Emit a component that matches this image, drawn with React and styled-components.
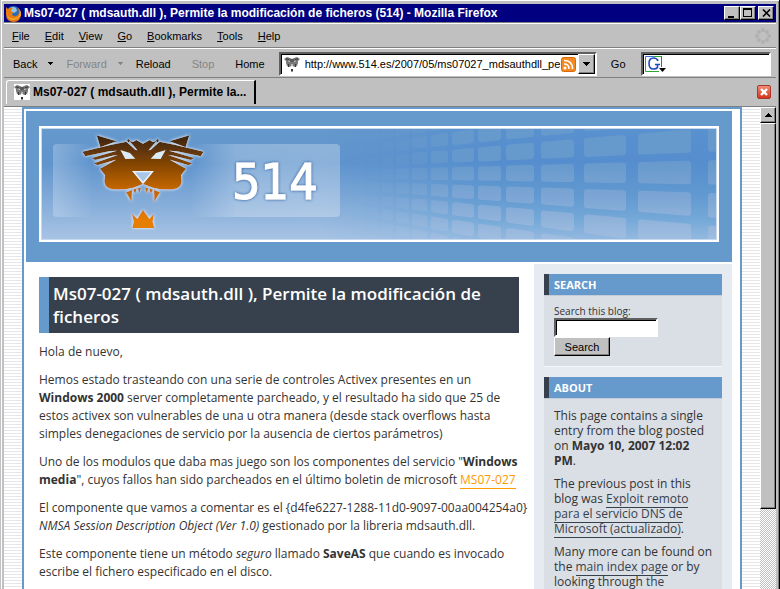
import React from 'react';
import styled, { createGlobalStyle, css } from 'styled-components';

const ui = '"Liberation Sans", Arial, sans-serif';
const blog = '"Open Sans", "Trebuchet MS", sans-serif';
const face = '#c0c0c0';
const blue = '#6699cc';
const slate = '#37414d';

const GlobalStyle = createGlobalStyle`
  *, *::before, *::after { box-sizing: border-box; }
  body { margin: 0; background: ${face}; }
  button, input { font: inherit; color: inherit; border-radius: 0; margin: 0; }
`;

const raised = css`
  background: ${face};
  border: 1px solid;
  border-color: #fff #000 #000 #fff;
  box-shadow: inset -1px -1px 0 #808080;
`;

const sunken = css`
  background: #fff;
  border: 2px solid;
  border-color: #606060 #fff #fff #606060;
  box-shadow: inset 1px 1px 0 #000;
`;

const Window = styled.div`
  display: flex;
  flex-direction: column;
  height: 100vh;
  padding: 4px 3px 0 3px;
  overflow: hidden;
  background: ${face};
  border-left: 1px solid ${face};
  border-right: 1px solid #000;
  box-shadow: inset 1px 1px 0 #fff, inset -1px 0 0 #808080;
  font: 11px/14px ${ui};
  color: #000;
`;

const TitleBar = styled.header`
  display: flex;
  align-items: center;
  flex: none;
  height: 18px;
  padding: 0 2px 0 1px;
  gap: 2px;
  background: #000080;
  color: #fff;
  font-weight: bold;
  font-size: 12px;
`;

const WindowTitle = styled.h1`
  flex: 1;
  margin: 0;
  font-size: 12px;
  line-height: 18px;
  white-space: nowrap;
`;

const CaptionGroup = styled.div`
  display: flex;
`;

const CaptionButton = styled.button`
  ${raised}
  display: grid;
  place-items: center;
  width: 16px;
  height: 14px;
  padding: 0;
  color: #000;
`;

const Bar = styled.div`
  display: flex;
  align-items: center;
  flex: none;
  height: ${(p) => p.$height}px;
  border-top: 1px solid #808080;
  box-shadow: inset 0 1px 0 #fff;
`;

const MenuBar = styled(Bar).attrs({ as: 'nav' })`
  padding: 2px 5px 0 8px;
  gap: 15px;
`;

const MenuItem = styled.button`
  padding: 0;
  border: 0;
  background: none;

  &::first-letter { text-decoration: underline; }
`;

const Throbber = styled.svg`
  margin-left: auto;
`;

const NavBar = styled(Bar)`
  padding: 2px 5px 0 9px;
  gap: 21px;
`;

const NavButton = styled.button`
  display: flex;
  align-items: center;
  gap: 11px;
  padding: 0;
  border: 0;
  background: none;

  &:disabled { color: #858585; }
`;

const NavPair = styled.div`
  display: flex;
  gap: 13px;
`;

const AddressBox = styled.form`
  ${sunken}
  display: flex;
  align-items: center;
  flex: 5 1 0;
  min-width: 0;
  height: 24px;
  margin-left: -7px;
  padding: 1px 0 0 3px;
`;

const AddressInput = styled.input`
  flex: 1;
  min-width: 0;
  height: 18px;
  padding: 0 0 0 5px;
  border: 0;
  outline: 0;
  background: none;
`;

const DropButton = styled.button`
  ${raised}
  display: grid;
  place-items: center;
  width: 17px;
  height: 20px;
  margin-left: 2px;
  padding: 0;
`;

const GoButton = styled(NavButton)`
  margin: 0 -6px 0 -7px;
`;

const SearchBox = styled.form`
  ${sunken}
  display: flex;
  align-items: center;
  flex: 2 1 0;
  min-width: 0;
  height: 24px;
  padding-left: 2px;
`;

const TabBar = styled(Bar)`
  align-items: stretch;
  justify-content: space-between;
  padding: 2px 5px 2px 2px;
  box-shadow: none;
`;

const Tab = styled.button`
  display: flex;
  align-items: center;
  gap: 3px;
  padding: 0 8px 2px 7px;
  background: ${face};
  border: solid;
  border-width: 1px 2px 0 1px;
  border-color: #fff #000 #fff #fff;
  border-radius: 3px 0 0 0;
  font-size: 12px;
  font-weight: bold;
`;

const TabClose = styled.button`
  display: grid;
  place-items: center;
  align-self: center;
  width: 14px;
  height: 14px;
  padding: 0;
  border: 1px solid #a33a2c;
  border-radius: 2px;
  background: linear-gradient(#f08a78, #d8331c);
`;

const Viewport = styled.div`
  display: flex;
  flex: 1;
  min-height: 0;
  border-top: 1px solid #808080;
`;

const Canvas = styled.div`
  flex: 1;
  min-width: 0;
  overflow: hidden;
  background: repeating-linear-gradient(#fff 0 2px, #e6e6ea 2px 3px);
  font: 12px/18px ${blog};
  color: #333;
`;

const Page = styled.div`
  max-width: 720px;
  min-height: 100%;
  margin: 0 auto;
  padding: 2px 8px 0 2px;
  background: #fff;
  border: 2px solid ${blue};
  border-bottom: 0;
`;

const Masthead = styled.div`
  padding: 15px 13px 20px;
  background: ${blue};
`;

const Banner = styled.svg`
  display: block;
  width: 100%;
  height: 116px;
`;

const Columns = styled.div`
  display: flex;
  align-items: flex-start;
  gap: 15px;
  padding-top: 2px;
`;

const Article = styled.main`
  flex: 1;
  min-width: 0;
  padding: 13px 0 0 13px;
`;

const Headline = styled.h2`
  margin: 0 0 10px;
  padding: 5px 5px 5px 4px;
  background: ${slate};
  border-left: 10px solid ${blue};
  color: #fff;
  font-size: 17px;
  font-weight: 600;
  line-height: 23px;
`;

const Text = styled.p`
  margin: 0 0 10px;
`;

const Unbroken = styled.span`
  white-space: nowrap;
`;

const Link = styled.a`
  color: ${(p) => (p.$accent ? '#ff9900' : slate)};
  text-decoration: none;
  border-bottom: 1px solid;
`;

const Sidebar = styled.aside`
  display: flex;
  flex-direction: column;
  flex: none;
  gap: 10px;
  width: 198px;
  padding: 10px;
  background: #e6eaf1;
`;

const Widget = styled.section`
  border-bottom: 1px solid #f4f6f9;
  background: #dadee5;
`;

const WidgetTitle = styled.h3`
  margin: 0;
  padding: 0 5px;
  border-left: 5px solid ${slate};
  background: ${blue};
  box-shadow: 0 1px 0 #c5ccd8;
  color: #fff;
  font-size: 11px;
  font-weight: bold;
  line-height: 21px;
  text-transform: uppercase;
`;

const WidgetBody = styled.div`
  padding: 10px 9px 2px 10px;
  line-height: 15px;

  ${Text} { margin-bottom: 8px; }
`;

const BlogSearch = styled.form`
  display: flex;
  flex-direction: column;
  align-items: flex-start;
  padding-bottom: 8px;
`;

const FieldLabel = styled.label`
  font-size: 10px;
  line-height: 13px;
`;

const Field = styled.input`
  ${sunken}
  width: 104px;
  height: 19px;
`;

const SubmitButton = styled.button`
  ${raised}
  width: 56px;
  height: 19px;
  padding: 0;
  font: 11px/16px ${ui};
  color: #000;
`;

const Scrollbar = styled.div`
  display: flex;
  flex-direction: column;
  flex: none;
  width: 16px;
  background: repeating-conic-gradient(#fff 0 25%, ${face} 0 50%) 0 0 / 2px 2px;
`;

const ScrollButton = styled.button`
  ${raised}
  display: grid;
  place-items: center;
  flex: none;
  height: 16px;
  padding: 0;
`;

const Thumb = styled.div`
  ${raised}
  flex: 0 0 80%;
`;

const Arrow = ({ up }) => (
  <svg width="7" height="4" viewBox="0 0 7 4" shapeRendering="crispEdges" aria-hidden="true">
    <path d={up ? 'M3 0h1v1h1v1h1v1h1v1H0V3h1V2h1V1h1z' : 'M0 0h7v1H6v1H5v1H4v1H3V3H2V2H1V1H0z'} fill="currentColor" />
  </svg>
);

const SmallArrow = () => (
  <svg width="5" height="3" viewBox="0 0 5 3" shapeRendering="crispEdges" aria-hidden="true">
    <path d="M0 0h5v1H4v1H3v1H2V2H1V1H0z" fill="currentColor" />
  </svg>
);

const FirefoxIcon = () => (
  <svg width="17" height="17" viewBox="0 0 17 17" aria-hidden="true">
    <circle cx="8.5" cy="8" r="7" fill="#2b6cb8" />
    <path d="M5 3q3-2 6 0l1 3-3 2-3-1z" fill="#8fc4ec" />
    <path d="M1 2l2 2q2-2 5-1L6 5l1 2 2 0-2 2q1 3 4 2 3-1 3-4l-1-4q3 2 3 6 0 7-7 8-8 0-8-8z" fill="#e87a12" />
    <path d="M2 5q-1 5 3 8 4 2 8-1-3 4-8 2-4-3-3-9z" fill="#f9c440" />
    <path d="M14 4q2 3 0 7-2 3-5 3 5 0 7-4 0-4-2-6z" fill="#f8b52c" />
  </svg>
);

const FaviconIcon = () => (
  <svg width="16" height="16" viewBox="0 0 16 16" aria-hidden="true">
    <rect width="16" height="16" fill="#fff" />
    <path d="M0 3L3 1l3 1 2 1 2-1 3-1 3 2-2 2v2l-1 3-3 1-2-2-2 2-3-1-1-3V5z" fill="#777" />
    <path d="M4 4.500l3 1.500H5zM12 4.500L9 6h2zM7 8h2l-1 1.500z" fill="#ddd" />
    <path d="M2 3l3 .5M14 3l-3 .5M4.500 8v3M11.500 8v3M7 3v3M9 3v3" stroke="#3a3a3a" />
    <path d="M7 13h2v2.500H7z" fill="#333" />
  </svg>
);

const FeedIcon = () => (
  <svg width="15" height="15" viewBox="0 0 15 15" aria-hidden="true">
    <rect x=".5" y=".5" width="14" height="14" rx="2" fill="#f5891f" stroke="#d96a0a" />
    <circle cx="4" cy="11" r="1.500" fill="#fff" />
    <path d="M3 7q5 0 5 5M3 3.500q8.500 0 8.500 8.500" fill="none" stroke="#fff" strokeWidth="1.700" />
  </svg>
);

const GoogleIcon = () => (
  <svg width="22" height="18" viewBox="0 0 22 18" aria-hidden="true">
    <path d="M.5 16V1.500H16" fill="none" stroke="#3d6fd8" />
    <path d="M.5 8v8.500H14" fill="none" stroke="#2fa83a" />
    <path d="M8 1.500h8" stroke="#2fa83a" />
    <path d="M16.500 1v11" stroke="#e03020" />
    <path d="M13 6Q12 3 8.500 3 4 3 4 8.500 4 14 8.500 14q3 0 4-1.500V9.500M10 9.500h5" fill="none" stroke="#2048c0" strokeWidth="1.600" />
    <path d="M14 13h7l-3.500 4z" fill="#000" />
  </svg>
);

const throbberDots = [[8, 2], [12, 4], [14, 8], [12, 12], [8, 14], [4, 12], [2, 8], [4, 4]];

const gridColumns = [
  [347, 354], [357, 366], [369, 379], [382, 393], [396, 409], [412, 427], [431, 448],
  [452, 474], [478, 501], [506, 534], [541, 574], [584, 626], [638, 691], [708, 770],
].map(([a, b]) => [a - 39, b - 39]);

const gridCells = gridColumns.flatMap(([left, right]) =>
  [-5, -4, -3, -2, -1, 0, 1, 2, 3, 4].map((row) => {
    const pitch = (x) => 15.5 + (x - 380) * 0.0595;
    const y = (x, k) => 49 + (k + 0.42) * pitch(x);
    const r = Math.min(3, (right - left) / 9);
    const l = left + r;
    const e = right - r;
    const inset = 0.13;
    return {
      r,
      opacity: Math.min(1, Math.max(0.1, (left - 290) / 110)),
      d: `M${l} ${y(l, row + inset) + r}L${e} ${y(e, row + inset) + r}L${e} ${y(e, row + 1 - inset) - r}L${l} ${y(l, row + 1 - inset) - r}Z`,
    };
  })
);

const halfHead =
  'M219 56L199 45L189 51L178 47L202 76L196 74L169 50L120 60L37 80L46 94L118 79L140 77L66 99L75 105L128 92L143 90L72 115L82 121L138 104L90 131L105 151L103 170Q106 190 128 193Q158 196 190 188L219 177L187 138H219Z';

const HeadHalf = () => (
  <>
    <path d="M80 31L140 49L91 67Z" />
    <path d={halfHead} />
    <path d="M174 41L180 46L177 53L171 48Z" />
    <path d="M168 202L186 195L185 230ZM189 194L200 190L196 206ZM203 190L213 188L208 204Z" />
  </>
);

const SiteBanner = () => (
  <Banner viewBox="0 0 680 116" preserveAspectRatio="xMinYMid slice" role="img" aria-label="514">
    <defs>
      <linearGradient id="sky" x2="0" y2="1">
        <stop offset="0" stopColor="#6699cc" />
        <stop offset=".32" stopColor="#5f94cd" />
        <stop offset="1" stopColor="#aac5e5" />
      </linearGradient>
      <linearGradient id="beams" x2="0" y2="1">
        <stop offset="0" stopColor="#5a91cf" />
        <stop offset=".3" stopColor="#558dce" />
        <stop offset=".6" stopColor="#6199d0" />
        <stop offset=".8" stopColor="#74a8d8" />
        <stop offset="1" stopColor="#98bbe0" />
      </linearGradient>
      <linearGradient id="tiles" gradientUnits="userSpaceOnUse" x1="0" x2="0" y1="0" y2="116">
        <stop offset=".3" stopColor="#6699cc" />
        <stop offset=".6" stopColor="#7ba5d4" />
        <stop offset="1" stopColor="#a3bfe1" />
      </linearGradient>
      <linearGradient id="fade">
        <stop offset=".42" stopColor="#fff" stopOpacity="0" />
        <stop offset=".66" stopColor="#fff" />
      </linearGradient>
      <mask id="right"><rect width="680" height="116" fill="url(#fade)" /></mask>
      <linearGradient id="panel">
        <stop offset="0" stopColor="#fff" stopOpacity=".24" />
        <stop offset=".14" stopColor="#fff" stopOpacity="0" />
        <stop offset=".48" stopColor="#fff" stopOpacity="0" />
        <stop offset=".64" stopColor="#fff" stopOpacity=".26" />
        <stop offset="1" stopColor="#fff" stopOpacity=".28" />
      </linearGradient>
      <linearGradient id="fur" gradientUnits="userSpaceOnUse" x1="0" x2="0" y1="33" y2="290">
        <stop offset="0" stopColor="#3c2410" />
        <stop offset=".3" stopColor="#7d4205" />
        <stop offset=".6" stopColor="#c06504" />
        <stop offset="1" stopColor="#e67e05" />
      </linearGradient>
      <filter id="glow" x="-20%" y="-20%" width="140%" height="140%">
        <feDropShadow dx="0" dy="0" stdDeviation="4" floodColor="#fff" floodOpacity="1" />
      </filter>
      <filter id="shade" x="-20%" y="-20%" width="140%" height="140%">
        <feDropShadow dx="0" dy="0" stdDeviation="1.500" floodColor="#1d4f94" floodOpacity="1" />
      </filter>
    </defs>
    <rect width="680" height="116" fill="url(#sky)" />
    <g mask="url(#right)">
      <rect width="680" height="116" fill="url(#beams)" />
      {gridCells.map((cell) => (
        <path key={cell.d} d={cell.d} fill="url(#tiles)" stroke="url(#tiles)" strokeWidth={cell.r * 2} strokeLinejoin="round" opacity={cell.opacity} />
      ))}
    </g>
    <rect x="14" y="18" width="287" height="73" rx="4" fill="url(#panel)" />
    <g transform="translate(31 -1) scale(.3333)" fill="url(#fur)" filter="url(#glow)">
      <HeadHalf />
      <g transform="translate(438 0) scale(-1 1)"><HeadHalf /></g>
      <path d="M187 309L191 290L186 266L202 281L219 254L238 281L252 266L248 290L253 309Z" />
      <path d="M151 75L180 84L196 101L166 102ZM287 75L258 84L242 101L272 102Z" fill="#dcebf8" />
      <path d="M191 140H247L219 173Z" fill="#a9c6e6" stroke="#eaf3fb" strokeWidth="4" />
    </g>
    <text x="193" y="73" fill="#fff" stroke="#fff" fontFamily="DejaVu Sans Condensed, DejaVu Sans, sans-serif" fontSize="50" filter="url(#shade)">514</text>
    <rect x="1" y="1" width="678" height="114" fill="none" stroke="#fff" strokeWidth="2" />
    <rect x="2.500" y="2.500" width="675" height="111" fill="none" stroke="#c4d8ef" />
  </Banner>
);

export default function App() {
  return (
    <>
      <GlobalStyle />
      <Window>
        <TitleBar>
          <FirefoxIcon />
          <WindowTitle>Ms07-027 ( mdsauth.dll ), Permite la modificación de ficheros (514) - Mozilla Firefox</WindowTitle>
          <CaptionGroup>
            <CaptionButton aria-label="Minimize">
              <svg width="10" height="9"><path d="M1 7h6v2H1z" /></svg>
            </CaptionButton>
            <CaptionButton aria-label="Maximize">
              <svg width="10" height="10" shapeRendering="crispEdges"><path d="M0 0h9v9H0zM1 2v6h7V2z" fillRule="evenodd" /></svg>
            </CaptionButton>
          </CaptionGroup>
          <CaptionButton aria-label="Close">
            <svg width="9" height="8"><path d="M1 .5l7 7M8 .5l-7 7" stroke="#000" strokeWidth="1.600" /></svg>
          </CaptionButton>
        </TitleBar>

        <MenuBar $height={25}>
          {['File', 'Edit', 'View', 'Go', 'Bookmarks', 'Tools', 'Help'].map((name) => (
            <MenuItem key={name}>{name}</MenuItem>
          ))}
          <Throbber width="16" height="16" aria-hidden="true">
            {throbberDots.map(([x, y]) => <circle key={`${x}-${y}`} cx={x} cy={y} r="2" fill="#b0b0b0" />)}
          </Throbber>
        </MenuBar>

        <NavBar $height={30}>
          <NavPair>
            <NavButton>Back <SmallArrow /></NavButton>
            <NavButton disabled>Forward <SmallArrow /></NavButton>
            <NavButton>Reload</NavButton>
          </NavPair>
          <NavButton disabled>Stop</NavButton>
          <NavButton>Home</NavButton>
          <AddressBox>
            <FaviconIcon />
            <AddressInput aria-label="Address" defaultValue="http://www.514.es/2007/05/ms07027_mdsauthdll_pe" />
            <FeedIcon />
            <DropButton type="button" aria-label="Show history"><Arrow /></DropButton>
          </AddressBox>
          <GoButton>Go</GoButton>
          <SearchBox>
            <GoogleIcon />
            <AddressInput aria-label="Web search" />
          </SearchBox>
        </NavBar>

        <TabBar $height={29}>
          <Tab><FaviconIcon />Ms07-027 ( mdsauth.dll ), Permite la...</Tab>
          <TabClose aria-label="Close tab">
            <svg width="8" height="8"><path d="M1 1l6 6M7 1L1 7" stroke="#fff" strokeWidth="2.400" /></svg>
          </TabClose>
        </TabBar>

        <Viewport>
          <Canvas>
            <Page>
              <Masthead><SiteBanner /></Masthead>
              <Columns>
                <Article>
                  <Headline>Ms07-027 ( mdsauth.dll ), Permite la modificación de ficheros</Headline>
                  <Text>Hola de nuevo,</Text>
                  <Text>
                    Hemos estado trasteando con una serie de controles Activex presentes en un{' '}
                    <b>Windows 2000</b> server completamente parcheado, y el resultado ha sido que 25 de
                    estos activex son vulnerables de una u otra manera (desde stack overflows hasta
                    simples denegaciones de servicio por la ausencia de ciertos parámetros)
                  </Text>
                  <Text>
                    Uno de los modulos que daba mas juego son los componentes del servicio "<b>Windows
                    media</b>", cuyos fallos han sido parcheados en el último boletin de microsoft{' '}
                    <Link href="#ms07-027" $accent>MS07-027</Link>
                  </Text>
                  <Text>
                    <Unbroken>El componente que vamos a comentar es el {'{d4fe6227-1288-11d0-9097-00aa004254a0}'}</Unbroken>{' '}
                    <Unbroken><i>NMSA Session Description Object (Ver 1.0)</i> gestionado por la libreria mdsauth.dll.</Unbroken>
                  </Text>
                  <Text>
                    Este componente tiene un método <i>seguro</i> llamado <b>SaveAS</b> que cuando es invocado
                    escribe el fichero especificado en el disco.
                  </Text>
                </Article>
                <Sidebar>
                  <Widget>
                    <WidgetTitle>Search</WidgetTitle>
                    <WidgetBody>
                      <BlogSearch>
                        <FieldLabel htmlFor="blog-search">Search this blog:</FieldLabel>
                        <Field id="blog-search" />
                        <SubmitButton type="button">Search</SubmitButton>
                      </BlogSearch>
                    </WidgetBody>
                  </Widget>
                  <Widget>
                    <WidgetTitle>About</WidgetTitle>
                    <WidgetBody>
                      <Text>This page contains a single entry from the blog posted on <b>Mayo 10, 2007 12:02 PM</b>.</Text>
                      <Text>
                        The previous post in this blog was{' '}
                        <Link href="#previous">Exploit remoto para el servicio DNS de Microsoft (actualizado)</Link>.
                      </Text>
                      <Text>
                        Many more can be found on the <Link href="#main">main index page</Link> or by looking
                        through <Link href="#archives">the</Link>
                      </Text>
                    </WidgetBody>
                  </Widget>
                </Sidebar>
              </Columns>
            </Page>
          </Canvas>
          <Scrollbar>
            <ScrollButton aria-label="Scroll up"><Arrow up /></ScrollButton>
            <Thumb />
          </Scrollbar>
        </Viewport>
      </Window>
    </>
  );
}
